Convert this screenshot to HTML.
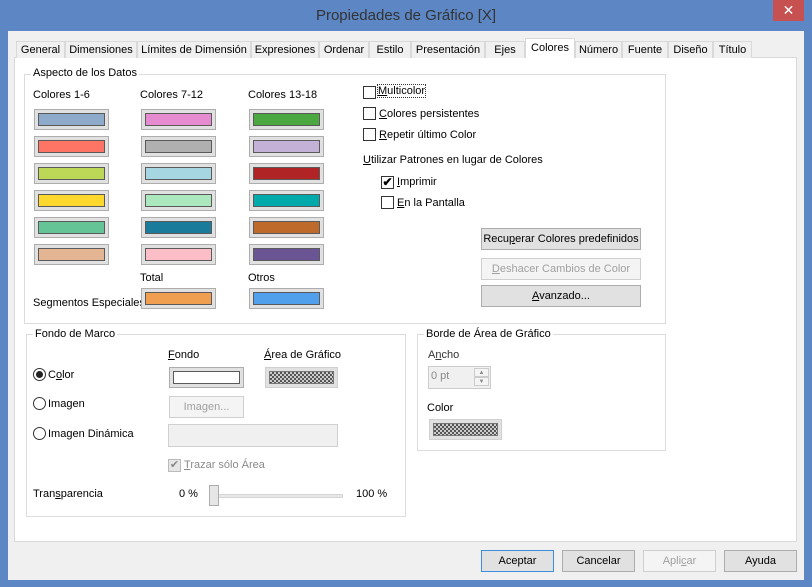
<!DOCTYPE html>
<html><head><meta charset="utf-8"><style>
*{box-sizing:border-box;margin:0;padding:0}
body{width:812px;height:587px;background:#5c87c4;position:relative;overflow:hidden;font-family:"Liberation Sans",sans-serif;font-size:11px;color:#000}
.a{position:absolute;white-space:nowrap}
.title{left:0;top:7px;width:812px;text-align:center;font-size:15px;color:#333}
.close{left:773px;top:0;width:31px;height:21px;background:#c75050;color:#fff;text-align:center;font-size:14px;line-height:21px}
.client{left:8px;top:31px;width:796px;height:549px;background:#f0f0f0}
.panel{left:14px;top:57px;width:783px;height:485px;background:#fff;border:1px solid #d9d9d9}
.tab{top:41px;height:17px;border:1px solid #d9d9d9;border-bottom:none;background:#f0f0f0;text-align:center;line-height:16px}
.tab.sel{top:38px;height:20px;background:#fff;z-index:2;line-height:19px}
.grp{border:1px solid #dcdcdc}
.lg{background:#fff;padding:0 2px;line-height:13px}
.sw{width:75px;height:21px;border:1px solid #adadad;background:#e1e1e1;padding:3px}
.sw div{width:100%;height:100%;border:1px solid #5a5a5a}
.cb{width:13px;height:13px;border:1px solid #333;background:#fff}
.btn{height:22px;border:1px solid #adadad;background:#e1e1e1;text-align:center;line-height:20px}
.dis{border-color:#cfcfcf;background:#f4f4f4;color:#a0a0a0}
.rad{width:13px;height:13px;border:1px solid #333;border-radius:50%;background:#fff}
.chk{background-image:conic-gradient(#555 25%,#ccc 0 50%,#555 0 75%,#ccc 0);background-size:4px 4px}
u{text-decoration:underline}
</style></head><body>
<div class="a title">Propiedades de Gráfico [X]</div>
<div class="a close">✕</div>
<div class="a client"></div>
<div class="a panel"></div>
<div class="a tab" style="left:16px;width:49px">General</div>
<div class="a tab" style="left:65px;width:72px">Dimensiones</div>
<div class="a tab" style="left:137px;width:114px">Límites de Dimensión</div>
<div class="a tab" style="left:251px;width:68px">Expresiones</div>
<div class="a tab" style="left:319px;width:50px">Ordenar</div>
<div class="a tab" style="left:369px;width:42px">Estilo</div>
<div class="a tab" style="left:411px;width:74px">Presentación</div>
<div class="a tab" style="left:485px;width:40px">Ejes</div>
<div class="a tab sel" style="left:525px;width:50px">Colores</div>
<div class="a tab" style="left:575px;width:47px">Número</div>
<div class="a tab" style="left:622px;width:46px">Fuente</div>
<div class="a tab" style="left:668px;width:45px">Diseño</div>
<div class="a tab" style="left:713px;width:39px">Título</div>

<div class="a grp" style="left:24px;top:74px;width:642px;height:250px"></div>
<div class="a lg" style="left:31px;top:67px">Aspecto de los Datos</div>
<div class="a" style="left:33px;top:89px">Colores 1-6</div>
<div class="a" style="left:140px;top:89px">Colores 7-12</div>
<div class="a" style="left:248px;top:89px">Colores 13-18</div>

<div class="a sw" style="left:34px;top:109px"><div style="background:#8eaacb"></div></div>
<div class="a sw" style="left:34px;top:136px"><div style="background:#fe7465"></div></div>
<div class="a sw" style="left:34px;top:163px"><div style="background:#bcd856"></div></div>
<div class="a sw" style="left:34px;top:190px"><div style="background:#fed82d"></div></div>
<div class="a sw" style="left:34px;top:217px"><div style="background:#64c496"></div></div>
<div class="a sw" style="left:34px;top:244px"><div style="background:#e3b592"></div></div>
<div class="a sw" style="left:141px;top:109px"><div style="background:#e78bd0"></div></div>
<div class="a sw" style="left:141px;top:136px"><div style="background:#b0b0b0"></div></div>
<div class="a sw" style="left:141px;top:163px"><div style="background:#a6d6e2"></div></div>
<div class="a sw" style="left:141px;top:190px"><div style="background:#abe8bd"></div></div>
<div class="a sw" style="left:141px;top:217px"><div style="background:#1a7b9b"></div></div>
<div class="a sw" style="left:141px;top:244px"><div style="background:#fdbec8"></div></div>
<div class="a sw" style="left:249px;top:109px"><div style="background:#4ba73f"></div></div>
<div class="a sw" style="left:249px;top:136px"><div style="background:#c4b1d7"></div></div>
<div class="a sw" style="left:249px;top:163px"><div style="background:#b02426"></div></div>
<div class="a sw" style="left:249px;top:190px"><div style="background:#00aaab"></div></div>
<div class="a sw" style="left:249px;top:217px"><div style="background:#bd6a2b"></div></div>
<div class="a sw" style="left:249px;top:244px"><div style="background:#6a5494"></div></div>
<div class="a" style="left:140px;top:272px">Total</div>
<div class="a" style="left:248px;top:272px">Otros</div>
<div class="a" style="left:33px;top:297px">Segmentos Especiales</div>
<div class="a sw" style="left:141px;top:288px"><div style="background:#f09e50"></div></div>
<div class="a sw" style="left:249px;top:288px"><div style="background:#50a0eb"></div></div>

<div class="a cb" style="left:363px;top:86px"></div><div class="a" style="left:378px;top:85px;outline:1px dotted #333"><u>M</u>ulticolor</div>
<div class="a cb" style="left:363px;top:107px"></div><div class="a" style="left:379px;top:108px"><u>C</u>olores persistentes</div>
<div class="a cb" style="left:363px;top:128px"></div><div class="a" style="left:379px;top:129px"><u>R</u>epetir último Color</div>
<div class="a" style="left:363px;top:154px"><u>U</u>tilizar Patrones en lugar de Colores</div>
<div class="a cb" style="left:381px;top:176px;font-size:12px;line-height:11px;text-align:center;font-weight:bold">✔</div><div class="a" style="left:397px;top:176px"><u>I</u>mprimir</div>
<div class="a cb" style="left:381px;top:196px"></div><div class="a" style="left:397px;top:197px"><u>E</u>n la Pantalla</div>
<div class="a btn" style="left:481px;top:228px;width:160px">Recu<u>p</u>erar Colores predefinidos</div>
<div class="a btn dis" style="left:481px;top:258px;width:160px"><u>D</u>eshacer Cambios de Color</div>
<div class="a btn" style="left:481px;top:285px;width:160px"><u>A</u>vanzado...</div>

<div class="a grp" style="left:26px;top:334px;width:380px;height:183px"></div>
<div class="a lg" style="left:33px;top:328px">Fondo de Marco</div>
<div class="a" style="left:168px;top:349px"><u>F</u>ondo</div>
<div class="a" style="left:264px;top:349px"><u>Á</u>rea de Gráfico</div>
<div class="a rad" style="left:33px;top:368px"><div style="width:7px;height:7px;border-radius:50%;background:#222;margin:2px"></div></div>
<div class="a" style="left:48px;top:369px">C<u>o</u>lor</div>
<div class="a sw" style="left:169px;top:367px"><div style="background:#fff"></div></div>
<div class="a sw" style="left:265px;top:367px;width:73px;border-color:#d0d0d0"><div class="chk" style="border-color:#777"></div></div>
<div class="a rad" style="left:33px;top:397px"></div><div class="a" style="left:48px;top:398px">Imagen</div>
<div class="a btn dis" style="left:169px;top:396px;width:75px">Ima<u>g</u>en...</div>
<div class="a rad" style="left:33px;top:427px"></div><div class="a" style="left:48px;top:428px">Imagen Dinámica</div>
<div class="a" style="left:168px;top:424px;width:170px;height:23px;border:1px solid #d0d0d0;background:#f0f0f0"></div>
<div class="a cb" style="left:168px;top:459px;border-color:#bbb;background:#e6e6e6;color:#888;font-size:11px;line-height:11px;text-align:center">✔</div>
<div class="a" style="left:184px;top:459px;color:#8a8a8a"><u>T</u>razar sólo Área</div>
<div class="a" style="left:33px;top:488px">Tran<u>s</u>parencia</div>
<div class="a" style="left:179px;top:488px">0 %</div>
<div class="a" style="left:356px;top:488px">100 %</div>
<div class="a" style="left:214px;top:494px;width:129px;height:4px;background:#e7e7e7;border:1px solid #d6d6d6"></div>
<div class="a" style="left:209px;top:485px;width:10px;height:21px;background:#e6e6e6;border:1px solid #adadad"></div>

<div class="a grp" style="left:417px;top:334px;width:249px;height:117px"></div>
<div class="a lg" style="left:424px;top:328px">Borde de Área de Gráfico</div>
<div class="a" style="left:428px;top:349px;color:#333">A<u>n</u>cho</div>
<div class="a" style="left:428px;top:366px;width:63px;height:23px;border:1px solid #ccc;background:#f0f0f0;color:#888;padding:3px 0 0 2px">0 pt</div>
<div class="a" style="left:474px;top:368px;width:15px;height:9px;border:1px solid #ccc;background:#f4f4f4;font-size:6px;text-align:center;line-height:8px;color:#888">▲</div>
<div class="a" style="left:474px;top:377px;width:15px;height:9px;border:1px solid #ccc;background:#f4f4f4;font-size:6px;text-align:center;line-height:8px;color:#888">▼</div>
<div class="a" style="left:427px;top:402px">Color</div>
<div class="a sw" style="left:429px;top:419px;width:73px;border-color:#d0d0d0"><div class="chk" style="border-color:#777"></div></div>

<div class="a btn" style="left:481px;top:550px;width:73px;border-color:#3c8fe0">Aceptar</div>
<div class="a btn" style="left:562px;top:550px;width:73px">Cancelar</div>
<div class="a btn dis" style="left:643px;top:550px;width:73px">Apli<u>c</u>ar</div>
<div class="a btn" style="left:724px;top:550px;width:73px">Ayuda</div>
</body></html>
